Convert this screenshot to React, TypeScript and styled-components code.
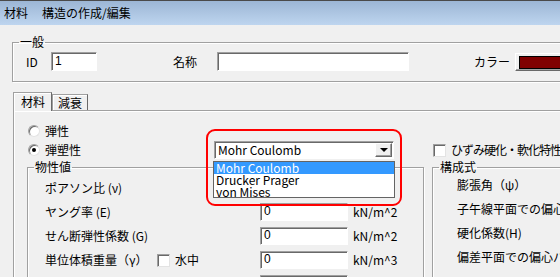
import React from 'react';
import styled, { createGlobalStyle } from 'styled-components';

const GlobalStyle = createGlobalStyle`
  html, body {
    margin: 0;
    padding: 0;
    background: #f0f0f0;
  }
  body {
    font-family: "Noto Sans CJK JP", "Noto Sans", sans-serif;
    font-size: 12px;
    color: #000;
  }
`;

const Window = styled.div`
  width: 560px;
  height: 277px;
  overflow: hidden;
  background: #f0f0f0;
`;

const TitleBar = styled.div`
  height: 24px;
  border-top: 1px solid #4a4a4a;
  background: linear-gradient(#9cb6d5, #bed5ef);
  display: flex;
  align-items: center;
  gap: 14px;
  padding-left: 4px;
  line-height: 14px;
  white-space: nowrap;
`;

const Body = styled.div`
  padding: 10px 0 0 12px;
  width: 640px;
`;

const GroupBox = styled.fieldset<{ $width?: number }>`
  margin: 0;
  padding: 0;
  min-width: 0;
  border: 1px solid #a0a0a0;
  box-shadow: inset 1px 1px 0 #fff, 1px 1px 0 #fff;
  width: ${(p) => (p.$width ? `${p.$width}px` : 'auto')};
  box-sizing: border-box;
`;

const Legend = styled.legend`
  margin-left: 6px;
  padding: 0 1px;
  line-height: 14px;
  height: 14px;
`;

const GeneralRow = styled.div`
  display: flex;
  align-items: center;
  height: 19px;
  padding: 3px 0 10px 13px;
`;

const Label = styled.span<{ $w?: number; $ml?: number }>`
  display: inline-block;
  width: ${(p) => (p.$w ? `${p.$w}px` : 'auto')};
  margin-left: ${(p) => p.$ml ?? 0}px;
  line-height: 14px;
  white-space: nowrap;
`;

const TextBox = styled.div<{ $w: number; $h?: number }>`
  width: ${(p) => p.$w}px;
  height: ${(p) => p.$h ?? 19}px;
  box-sizing: border-box;
  background: #fff;
  border: 1px solid;
  border-color: #a0a0a0 #fff #fff #a0a0a0;
  box-shadow: inset 1px 1px 0 #696969;
  padding: 0 3px;
  line-height: ${(p) => (p.$h ?? 19) - 3}px;
  font-family: "Liberation Sans", sans-serif;
  font-size: 12px;
`;

const ColorButton = styled.div`
  width: 60px;
  height: 18px;
  box-sizing: border-box;
  border: 1px solid;
  border-color: #fff #696969 #696969 #fff;
  box-shadow: inset -1px -1px 0 #a0a0a0;
  padding: 2px 3px;
`;

const Swatch = styled.div`
  height: 11px;
  background: #800000;
  border: 1px solid #000;
`;

const TabBar = styled.div`
  display: flex;
  align-items: flex-end;
  height: 19px;
  margin: 10px 0 -1px 1px;
  position: relative;
  z-index: 1;
`;

const Tab = styled.div<{ $active?: boolean }>`
  box-sizing: border-box;
  height: ${(p) => (p.$active ? 19 : 16)}px;
  margin-bottom: ${(p) => (p.$active ? 0 : 1)}px;
  padding: ${(p) => (p.$active ? '2px 6px 0 7px' : '1px 5px 0 5px')};
  background: #f0f0f0;
  border: 1px solid;
  border-bottom: none;
  border-color: #a0a0a0 #696969 transparent #a0a0a0;
  box-shadow: inset 1px 1px 0 #fff;
  line-height: 14px;
`;

const Panel = styled.div`
  margin-left: 1px;
  border-top: 1px solid #a0a0a0;
  border-left: 1px solid #a0a0a0;
  box-shadow: inset 1px 1px 0 #fff;
  padding: 10px 0 0 13px;
  height: 200px;
`;

const PanelGrid = styled.div`
  display: grid;
  grid-template-columns: 396px 200px;
  column-gap: 9px;
`;

const RadioRow = styled.div<{ $h: number }>`
  grid-column: 1 / -1;
  display: flex;
  align-items: center;
  height: ${(p) => p.$h}px;
`;

const Cell = styled.div`
  display: flex;
  align-items: center;
  height: 20px;
`;

const SplitCell = styled(Cell)`
  justify-content: space-between;
  padding-right: 29px;
`;

const RadioItem = styled.label`
  display: flex;
  align-items: center;
  gap: 5px;
  margin-left: 1px;
  line-height: 14px;
`;

const RadioCircle = styled.span<{ $checked?: boolean }>`
  width: 12px;
  height: 12px;
  box-sizing: border-box;
  border-radius: 50%;
  background: #fff;
  border: 1px solid;
  border-color: #a0a0a0 #e3e3e3 #e3e3e3 #a0a0a0;
  box-shadow: inset 1px 1px 0 #696969;
  display: flex;
  align-items: center;
  justify-content: center;

  &::after {
    content: '';
    width: 4px;
    height: 4px;
    border-radius: 50%;
    background: ${(p) => (p.$checked ? '#000' : 'transparent')};
  }
`;

const CheckItem = styled.label<{ $ml?: number; $tight?: boolean }>`
  display: inline-flex;
  align-items: center;
  gap: 5px;
  margin-left: ${(p) => p.$ml ?? 0}px;
  line-height: 14px;
  white-space: nowrap;
  letter-spacing: ${(p) => (p.$tight ? '-1px' : 'normal')};
`;

const CheckBox = styled.span`
  width: 13px;
  height: 13px;
  box-sizing: border-box;
  background: #fff;
  border: 1px solid;
  border-color: #a0a0a0 #e3e3e3 #e3e3e3 #a0a0a0;
  box-shadow: inset 1px 1px 0 #696969;
`;

const ComboWrap = styled.div`
  position: relative;
`;

const ComboBox = styled.div`
  width: 180px;
  height: 18px;
  box-sizing: border-box;
  background: #fff;
  border: 1px solid;
  border-color: #a0a0a0 #fff #fff #a0a0a0;
  box-shadow: inset 1px 1px 0 #696969;
  display: flex;
  align-items: center;
  padding: 1px 1px 1px 3px;
`;

const ComboText = styled.span`
  flex: 1;
  line-height: 14px;
`;

const ArrowButton = styled.div`
  width: 17px;
  height: 14px;
  box-sizing: border-box;
  background: #f0f0f0;
  border: 1px solid;
  border-color: #fff #696969 #696969 #fff;
  box-shadow: inset -1px -1px 0 #a0a0a0;
  display: flex;
  align-items: center;
  justify-content: center;

  &::after {
    content: '';
    border-left: 4px solid transparent;
    border-right: 4px solid transparent;
    border-top: 4px solid #000;
  }
`;

const DropList = styled.div`
  position: absolute;
  left: -1px;
  top: 20px;
  width: 182px;
  height: 37px;
  box-sizing: border-box;
  background: #fff;
  border: 1px solid #646464;
  z-index: 2;
`;

const DropItem = styled.div<{ $selected?: boolean }>`
  height: 12px;
  line-height: 12px;
  padding-left: 2px;
  background: ${(p) => (p.$selected ? '#3399ff' : 'transparent')};
  color: ${(p) => (p.$selected ? '#fff' : '#000')};
`;

const Highlight = styled.div`
  position: absolute;
  left: -8px;
  top: -12px;
  width: 196px;
  height: 77px;
  box-sizing: border-box;
  border: 2px solid #ff0000;
  border-radius: 9px;
  pointer-events: none;
  z-index: 3;
`;

const PropRows = styled.div<{ $pl: number; $pt: number }>`
  display: flex;
  flex-direction: column;
  gap: 6px;
  padding: ${(p) => p.$pt}px 0 0 ${(p) => p.$pl}px;
  height: 120px;
`;

const PropRow = styled.div`
  display: grid;
  grid-template-columns: 210px 88px auto;
  column-gap: 5px;
  align-items: center;
  height: 18px;
`;

const LabelCell = styled.div`
  display: flex;
  align-items: center;
  white-space: nowrap;
  line-height: 14px;
`;

const LabelText = styled.span<{ $w?: number }>`
  display: inline-block;
  min-width: ${(p) => (p.$w ? `${p.$w}px` : '0')};
`;

const Unit = styled.span`
  line-height: 14px;
  white-space: nowrap;
`;

const PlainRow = styled.div`
  height: 18px;
  display: flex;
  align-items: center;
  white-space: nowrap;
  line-height: 14px;
`;

const props = [
  { label: 'ポアソン比 (ν)', value: '', unit: '' },
  { label: 'ヤング率 (E)', value: '0', unit: 'kN/m^2' },
  { label: 'せん断弾性係数 (G)', value: '0', unit: 'kN/m^2' },
  { label: '単位体積重量（γ）', value: '0', unit: 'kN/m^3', check: '水中' },
  { label: '', value: '0', unit: '' },
];

const constitutive = [
  '膨張角（ψ）',
  '子午線平面での偏心パラメータ',
  '硬化係数(H)',
  '偏差平面での偏心パラメータ',
];

export default function App() {
  return (
    <Window>
      <GlobalStyle />
      <TitleBar>
        <span>材料</span>
        <span>構造の作成/編集</span>
      </TitleBar>
      <Body>
        <GroupBox>
          <Legend>一般</Legend>
          <GeneralRow>
            <Label $w={25}>ID</Label>
            <TextBox $w={46}>1</TextBox>
            <Label $w={44} $ml={76}>名称</Label>
            <TextBox $w={192} />
            <Label $w={41} $ml={65}>カラー</Label>
            <ColorButton>
              <Swatch />
            </ColorButton>
          </GeneralRow>
        </GroupBox>

        <TabBar>
          <Tab $active>材料</Tab>
          <Tab>減衰</Tab>
        </TabBar>
        <Panel>
          <PanelGrid>
            <RadioRow $h={19}>
              <RadioItem>
                <RadioCircle />
                弾性
              </RadioItem>
            </RadioRow>
            <SplitCell>
              <RadioItem>
                <RadioCircle $checked />
                弾塑性
              </RadioItem>
              <ComboWrap>
                <ComboBox>
                  <ComboText>Mohr Coulomb</ComboText>
                  <ArrowButton />
                </ComboBox>
                <DropList>
                  <DropItem $selected>Mohr Coulomb</DropItem>
                  <DropItem>Drucker Prager</DropItem>
                  <DropItem>von Mises</DropItem>
                </DropList>
                <Highlight />
              </ComboWrap>
            </SplitCell>
            <Cell>
              <CheckItem $ml={1} $tight>
                <CheckBox />
                ひずみ硬化・軟化特性
              </CheckItem>
            </Cell>

            <GroupBox $width={397}>
              <Legend>物性値</Legend>
              <PropRows $pl={17} $pt={5}>
                {props.map((r, i) => (
                  <PropRow key={i}>
                    <LabelCell>
                      <LabelText $w={r.check ? 112 : 0}>{r.label}</LabelText>
                      {r.check && (
                        <CheckItem>
                          <CheckBox />
                          {r.check}
                        </CheckItem>
                      )}
                    </LabelCell>
                    <TextBox $w={88} $h={18}>
                      {r.value}
                    </TextBox>
                    <Unit>{r.unit}</Unit>
                  </PropRow>
                ))}
              </PropRows>
            </GroupBox>
            <GroupBox $width={200}>
              <Legend>構成式</Legend>
              <PropRows $pl={24} $pt={2}>
                {constitutive.map((c) => (
                  <PlainRow key={c}>{c}</PlainRow>
                ))}
              </PropRows>
            </GroupBox>
          </PanelGrid>
        </Panel>
      </Body>
    </Window>
  );
}
